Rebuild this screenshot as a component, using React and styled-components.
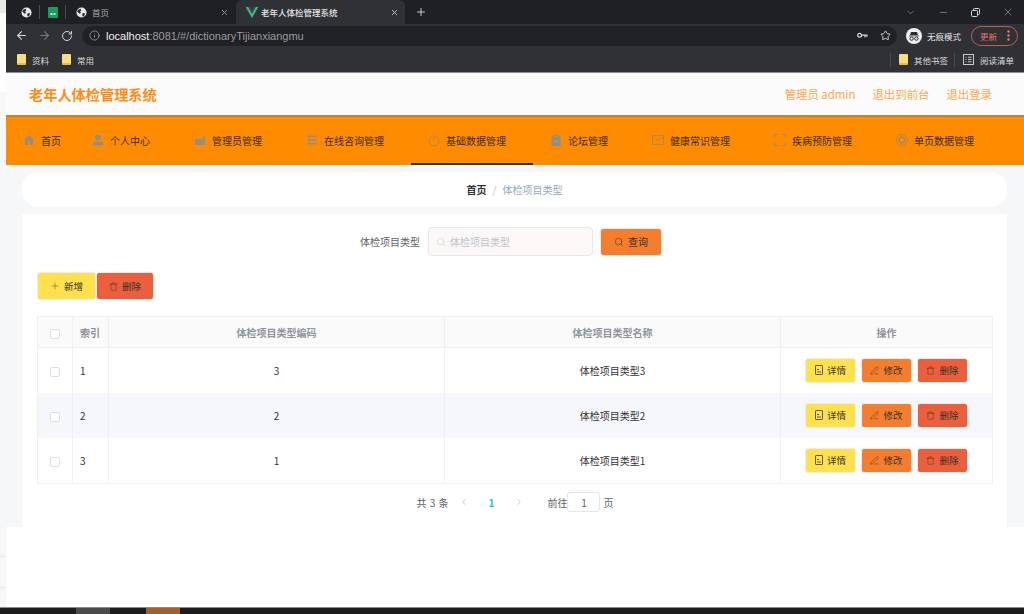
import React from 'react'
import styled, { createGlobalStyle } from 'styled-components'
import {
  ArrowLeft, ArrowRight, RotateCw, Info, Star, X, Plus, Minus, ChevronDown, ChevronLeft,
  ChevronRight, Search, Trash, PenLine,
} from 'lucide-react'

const GlobalStyle = createGlobalStyle`
  html, body { margin: 0; padding: 0; background: #fff; }
  body { font-family: "Noto Sans CJK SC", "Noto Sans", sans-serif; overflow: hidden; }
  * { box-sizing: border-box; }
`

const Screen = styled.div`
  width: 1024px;
  height: 614px;
  display: flex;
  flex-direction: column;
  overflow: hidden;
`
const Desktop = styled.div`
  height: 607px;
  display: flex;
`
const Strip = styled.div`
  width: 6px;
  display: flex;
  flex-direction: column;
  position: relative;
  z-index: 1;
`
const StripPart = styled.div`
  height: ${p => p.$h}px;
  flex: ${p => (p.$grow ? 1 : 'none')};
  background: ${p => p.$bg};
  border-bottom: ${p => (p.$line ? '1px solid #e6e7ea' : 'none')};
`
const Browser = styled.div`
  flex: 1;
  display: flex;
  flex-direction: column;
  min-width: 0;
`

/* chrome */
const TabBar = styled.div`
  height: 24px;
  margin-left: -6px;
  padding-left: 21px;
  background: #1f2023;
  display: flex;
  align-items: center;
  color: #c8c9cb;
`
const Divider = styled.span`
  width: 1px;
  height: 14px;
  background: #4a4b4e;
  margin: ${p => p.$m || '0 8px 0 7px'};
`
const InactiveTab = styled.div`
  width: 155px;
  display: flex;
  align-items: center;
  font-size: 8.5px;
  color: #a9aaad;
  gap: 5px;
  margin-left: 2px;
  padding-right: 2px;
`
const ActiveTab = styled.div`
  width: 169px;
  height: 24px;
  background: #303134;
  border-radius: 6px 6px 0 0;
  margin-left: 5px;
  padding: 0 6px 0 9px;
  display: flex;
  align-items: center;
  gap: 2px;
  font-size: 8.5px;
  color: #e6e6e7;
  font-weight: 500;
`
const TabTitle = styled.span`
  flex: 1;
`
const NewTab = styled(Plus)`
  margin-left: 10px;
`
const WindowButtons = styled.div`
  margin-left: auto;
  display: flex;
  align-items: center;
  gap: 22px;
  padding-right: 10px;
`
const Toolbar = styled.div`
  height: 23px;
  margin-left: -6px;
  background: #303134;
  padding: 0 6px 0 15px;
  display: flex;
  align-items: center;
  color: #d8d9da;
  gap: 10px;
`
const UrlPill = styled.div`
  width: 815px;
  height: 20px;
  margin-left: -1px;
  background: #202124;
  border-radius: 10px;
  padding: 0 6px 0 7px;
  display: flex;
  align-items: center;
  font-family: "Liberation Sans", sans-serif;
  font-size: 11px;
  color: #9a9b9e;
`
const UrlHost = styled.span`
  color: #f1f1f2;
  margin-left: 6px;
`
const UrlIcons = styled.div`
  margin-left: auto;
  display: flex;
  align-items: center;
  gap: 12px;
`
const Account = styled.div`
  height: 20px;
  margin-left: -1px;
  display: flex;
  align-items: center;
  gap: 5px;
  font-size: 8.5px;
  color: #e6e6e7;
  width: 58px;
`
const UpdatePill = styled.div`
  width: 47px;
  height: 20px;
  margin-left: -3px;
  border: 1px solid #b9605a;
  border-radius: 10px;
  padding: 0 7px 0 8px;
  display: flex;
  align-items: center;
  justify-content: space-between;
  font-size: 8.5px;
  color: #e8736c;
`
const Bookmarks = styled.div`
  height: 26px;
  margin-left: -6px;
  background: #303134;
  border-bottom: 1px solid #8a8a8c;
  padding: 0 10px 0 17px;
  display: flex;
  align-items: center;
  font-size: 8.5px;
  color: #dcdcdd;
`
const Mark = styled.div`
  display: flex;
  align-items: center;
  gap: 6px;
  margin-right: ${p => (p.$flush ? 0 : 13)}px;
`
const MarkRight = styled.div`
  margin-left: auto;
  display: flex;
  align-items: center;
`
const Folder = styled.span`
  width: 9px;
  height: 11px;
  background: #fbdd80;
  border-bottom: 2px solid #e8bd50;
  border-radius: 1px;
`

/* site */
const Header = styled.header`
  height: 42px;
  background: #fbfbfb;
  display: flex;
  align-items: center;
  padding: 0 32px 0 23px;
`
const Title = styled.h1`
  margin: 0;
  font-size: 14.2px;
  font-weight: 700;
  color: #ff8c14;
`
const HeaderLinks = styled.div`
  margin-left: auto;
  display: flex;
  gap: 17px;
  font-size: 11.4px;
  color: #ffa64d;
`
const Nav = styled.nav`
  height: 50px;
  background: #ff8c00;
  border-top: 2px solid #b1864a;
  display: flex;
`
const NavItem = styled.div`
  flex: none;
  white-space: nowrap;
  display: flex;
  align-items: center;
  padding: ${p => (p.$plain ? '0 14px 0 17px' : '0 13px 0 17px')};
  font-size: 10px;
  color: #3a2a10;
  border-bottom: 2px solid ${p => (p.$active ? '#33302c' : 'transparent')};
`
const NavIcon = styled.svg`
  width: 12px;
  height: 12px;
  margin-right: 6px;
  flex: none;
`
const NavChevron = styled(ChevronDown)`
  margin-left: 4px;
  color: #c99a55;
`
const Main = styled.main`
  height: 362px;
  background: #f6f7f9;
  padding: 7px 17px 0 16px;
  display: flex;
  flex-direction: column;
  gap: 7px;
`
const Breadcrumb = styled.div`
  height: 35px;
  background: #fff;
  border-radius: 16px;
  display: flex;
  align-items: center;
  justify-content: center;
  font-size: 10px;
  font-weight: 700;
  color: #303133;
  gap: 6px;
`
const CrumbSep = styled.span`
  color: #c0c4cc;
  font-weight: 400;
`
const CrumbLast = styled.span`
  color: #97a8be;
  font-weight: 400;
`
const Card = styled.section`
  flex: 1;
  background: #fff;
  padding: 13px 14px 0 15px;
`
const SearchRow = styled.div`
  height: 29px;
  display: flex;
  align-items: center;
  justify-content: center;
  padding-right: 8px;
`
const Label = styled.span`
  font-size: 10px;
  color: #606266;
  margin-right: 8px;
`
const SearchBox = styled.div`
  width: 165px;
  height: 29px;
  background: #fbf8f7;
  border: 1px solid #e8e8ec;
  border-radius: 4px;
  padding-left: 7px;
  display: flex;
  align-items: center;
  gap: 4px;
  font-size: 10px;
  color: #c0c4cc;
`
const Button = styled.button`
  border: 1px solid #eeeef0;
  border-radius: 3px;
  padding: 0;
  width: ${p => p.$w}px;
  height: ${p => p.$h}px;
  background: ${p => p.$bg};
  color: #3a3226;
  font-family: inherit;
  font-size: ${p => p.$fs || 9.5}px;
  display: inline-flex;
  align-items: center;
  justify-content: center;
  gap: 4px;
`
const SearchButton = styled(Button)`
  margin-left: 7px;
`
const ActionRow = styled.div`
  margin-top: 16px;
  display: flex;
`
const Table = styled.table`
  width: 955px;
  margin-top: 16px;
  border-collapse: collapse;
  table-layout: fixed;
  font-size: 10px;
`
const Th = styled.th`
  height: 31px;
  padding: ${p => (p.$left ? '0 0 0 7px' : 0)};
  background: #fafafa;
  border: 1px solid #eef0f3;
  color: #909399;
  font-weight: 700;
  text-align: ${p => (p.$left ? 'left' : 'center')};
`
const Row = styled.tr`
  background: ${p => (p.$striped ? '#f5f7fa' : '#fff')};
`
const Td = styled.td`
  height: ${p => (p.$last ? 46 : 45)}px;
  padding: ${p => (p.$left ? '0 0 0 7px' : 0)};
  border-left: 1px solid #eef0f3;
  border-right: 1px solid #eef0f3;
  border-bottom: ${p => (p.$last ? '1px solid #eef0f3' : 'none')};
  color: #333;
  text-align: ${p => (p.$left ? 'left' : 'center')};
`
const Check = styled.span`
  display: inline-block;
  width: 10px;
  height: 10px;
  background: #fff;
  border: 1px solid #dcdfe6;
  border-radius: 2px;
  vertical-align: middle;
`
const Ops = styled.div`
  display: flex;
  justify-content: center;
  gap: 5px;
`
const Pager = styled.div`
  margin-top: 8px;
  display: flex;
  align-items: center;
  justify-content: center;
  height: 20px;
  font-size: 10px;
  color: #606266;
`
const PagerTotal = styled.span`
  word-spacing: 1px;
`
const PageNum = styled.span`
  color: #1cc7b0;
  font-weight: 700;
  margin: 0 20px;
`
const PagerGap = styled.span`
  margin-left: ${p => p.$m}px;
`
const PageInput = styled.span`
  width: 33px;
  height: 20px;
  margin-right: 3px;
  border: 1px solid #e4e7ed;
  border-radius: 3px;
  display: flex;
  align-items: center;
  justify-content: center;
`

const Taskbar = styled.div`
  height: 7px;
  background: #1c1c1c;
  border-top: 1px solid #8c8c8c;
  display: flex;
`
const TaskItem = styled.span`
  width: 34px;
  height: 6px;
  margin-left: ${p => p.$m}px;
  background: ${p => p.$bg};
`
const Clock = styled.span`
  margin-left: auto;
  margin-right: 18px;
  font-family: "Liberation Sans", sans-serif;
  font-size: 9px;
  line-height: 10px;
  padding-top: 4px;
  color: #ddd;
`

const Globe = () => (
  <svg width="11" height="11" viewBox="0 0 12 12">
    <circle cx="6" cy="6" r="5.5" fill="#e8e8e9" />
    <path d="M2 3.2 5 2l.8 1.6L4.4 5l1 1.4-1.2 1L2.4 6 1.4 5zM7.4 6.6l2.6.6-1.2 2.6-1.6.6-.4-2z" fill="#26272a" />
  </svg>
)
const Sheet = () => (
  <svg width="10" height="11" viewBox="0 0 10 11">
    <rect width="10" height="11" rx="1" fill="#12a05c" />
    <rect x="2.5" y="6" width="2" height="2" fill="#cfeedd" />
    <rect x="5.5" y="6" width="2" height="2" fill="#cfeedd" />
  </svg>
)
const VueLogo = () => (
  <svg width="14" height="11" viewBox="0 0 14 12">
    <path d="M0 0h3l4 7 4-7h3L7 12z" fill="#3fb984" />
    <path d="M3 0h2.2L7 3.2 8.8 0H11L7 7z" fill="#35495e" />
  </svg>
)
const Restore = () => (
  <svg width="9" height="9" viewBox="0 0 9 9" fill="none" stroke="#d8d9da">
    <rect x=".5" y="2.5" width="6" height="6" rx="1" />
    <path d="M2.5 2.5V1.4a.9.9 0 0 1 .9-.9h4.2a.9.9 0 0 1 .9.9v4.2a.9.9 0 0 1-.9.9H6.5" />
  </svg>
)
const PasswordKey = () => (
  <svg width="11" height="7" viewBox="0 0 11 7" fill="none" stroke="#d8d9da" strokeWidth="1.2">
    <circle cx="2.6" cy="3.2" r="1.9" />
    <path d="M4.5 3.2h6M8 3.2v2.2M10 3.2v1.6" />
  </svg>
)
const Incognito = () => (
  <svg width="16" height="16" viewBox="0 0 16 16">
    <circle cx="8" cy="8" r="8" fill="#eeeeef" />
    <path d="M3 7.4h10v.9H3zM5 4h6l.9 3H4.1z" fill="#2a2b2e" />
    <circle cx="5.6" cy="10.6" r="1.7" fill="none" stroke="#2a2b2e" />
    <circle cx="10.4" cy="10.6" r="1.7" fill="none" stroke="#2a2b2e" />
  </svg>
)
const MoreDots = () => (
  <svg width="3" height="11" viewBox="0 0 3 11" fill="#e8736c">
    <circle cx="1.5" cy="1.5" r="1.2" /><circle cx="1.5" cy="5.5" r="1.2" /><circle cx="1.5" cy="9.5" r="1.2" />
  </svg>
)
const ReadList = () => (
  <svg width="11" height="11" viewBox="0 0 11 11" fill="none" stroke="#c9cacb">
    <rect x=".5" y=".5" width="10" height="10" />
    <path d="M2.5 3.2h1M5 3.2h3.6M2.5 5.5h1M5 5.5h3.6M2.5 7.8h1M5 7.8h3.6" />
  </svg>
)
const Tickets = () => (
  <svg width="8" height="10" viewBox="0 0 8 10" fill="none" stroke="currentColor" strokeWidth=".8">
    <rect x=".5" y=".5" width="7" height="9" rx=".6" />
    <path d="M2 4.5h2M2 7h4" />
  </svg>
)

const navIcons = {
  home: <path d="M6 1 .6 6.4 2 6.4V11h3V7.6h2V11h3V6.4h1.4z" fill="#8f8f8b" />,
  user: (
    <g fill="#8f8f8b">
      <circle cx="6" cy="3.4" r="2.9" />
      <path d="M.8 11.6V9.4c0-1.3 1-2 2.2-2h6c1.2 0 2.2.7 2.2 2v2.2z" />
    </g>
  ),
  wallet: <path d="M1 5h7.6L10.4 1l.8 1.6V11H1zM8 7.4h3.2v1.6H8z" fill="#8f8f8b" />,
  list: <path d="M1 1.6h10v1.5H1zM1 5.2h10v1.5H1zM1 8.9h10v1.5H1zM3 3.1h1v2H3zM3 6.7h1v2.2H3z" fill="#8f8f8b" />,
  power: (
    <g fill="none" stroke="#a48a5c" strokeWidth=".9">
      <path d="M3.6 2.4a5 5 0 1 0 4.8 0M6 .6v5" />
    </g>
  ),
  clip: (
    <g>
      <path d="M1.4 1.8h9.2V12H1.4z" fill="#8f8f8b" />
      <rect x="3.6" y=".4" width="4.8" height="2.4" fill="#8f8f8b" stroke="#ff8c00" strokeWidth=".5" />
      <path d="M3.6 7l1.8 1.8 3-3.2" fill="none" stroke="#ff8c00" />
    </g>
  ),
  mail: (
    <g fill="none" stroke="#a48a5c" strokeWidth=".9">
      <rect x=".5" y="1.6" width="11" height="8.8" />
      <path d="M.8 2.4 6 6.6l5.2-4.2" />
    </g>
  ),
  full: <path d="M.6 3.6V.6h3M8.4.6h3v3M11.4 8.4v3h-3M3.6 11.4h-3v-3" fill="none" stroke="#8f8f8b" />,
  target: (
    <g fill="none" stroke="#a48a5c" strokeWidth=".9">
      <circle cx="6" cy="6" r="5.5" />
      <circle cx="6" cy="6" r="3" strokeWidth="1.4" />
    </g>
  ),
}

const navItems = [
  { icon: 'home', label: '首页' },
  { icon: 'user', label: '个人中心' },
  { icon: 'wallet', label: '管理员管理' },
  { icon: 'list', label: '在线咨询管理' },
  { icon: 'power', label: '基础数据管理', active: true },
  { icon: 'clip', label: '论坛管理' },
  { icon: 'mail', label: '健康常识管理' },
  { icon: 'full', label: '疾病预防管理' },
  { icon: 'target', label: '单页数据管理' },
]

const rows = [
  { id: 1, code: 3, name: '体检项目类型3' },
  { id: 2, code: 2, name: '体检项目类型2' },
  { id: 3, code: 1, name: '体检项目类型1' },
]

const YELLOW = '#ffe14d'
const ORANGE = '#f57e2e'
const RED = '#eb5f3d'

const App = () => (
  <Screen>
    <GlobalStyle />
    <Desktop>
      <Strip>
        <StripPart $h={13} $bg="#e9e9ea" />
        <StripPart $h={79} $bg="#fff" />
        <StripPart $h={465} $bg="#f6f7f9" $line />
        <StripPart $h={31} $bg="#f6f7f9" $line />
        <StripPart $grow $bg="#f6f7f9" />
      </Strip>
      <Browser>
        <TabBar>
          <Globe />
          <Divider />
          <Sheet />
          <Divider />
          <InactiveTab>
            <Globe />
            <TabTitle>首页</TabTitle>
            <X size={9} />
          </InactiveTab>
          <ActiveTab>
            <VueLogo />
            <TabTitle>老年人体检管理系统</TabTitle>
            <X size={9} />
          </ActiveTab>
          <NewTab size={12} />
          <WindowButtons>
            <ChevronDown size={11} strokeWidth={1} />
            <Minus size={11} strokeWidth={1} />
            <Restore />
            <X size={12} strokeWidth={1} />
          </WindowButtons>
        </TabBar>
        <Toolbar>
          <ArrowLeft size={13} />
          <ArrowRight size={13} color="#77787a" />
          <RotateCw size={12} />
          <UrlPill>
            <Info size={11} strokeWidth={1.4} color="#bcbdbf" />
            <UrlHost>localhost</UrlHost>:8081/#/dictionaryTijianxiangmu
            <UrlIcons>
              <PasswordKey />
              <Star size={11} color="#d8d9da" />
            </UrlIcons>
          </UrlPill>
          <Account>
            <Incognito />
            无痕模式
          </Account>
          <UpdatePill>
            更新
            <MoreDots />
          </UpdatePill>
        </Toolbar>
        <Bookmarks>
          <Mark><Folder />资料</Mark>
          <Mark><Folder />常用</Mark>
          <MarkRight>
            <Divider $m="0 8px 0 0" />
            <Mark $flush><Folder />其他书签</Mark>
            <Divider $m="0 8px 0 6px" />
            <Mark $flush><ReadList />阅读清单</Mark>
          </MarkRight>
        </Bookmarks>
        <Header>
          <Title>老年人体检管理系统</Title>
          <HeaderLinks>
            <span>管理员 admin</span>
            <span>退出到前台</span>
            <span>退出登录</span>
          </HeaderLinks>
        </Header>
        <Nav>
          {navItems.map(item => (
            <NavItem key={item.label} $active={item.active} $plain={item.icon === 'home'}>
              <NavIcon viewBox="0 0 12 12">{navIcons[item.icon]}</NavIcon>
              {item.label}
              {item.icon !== 'home' && <NavChevron size={10} strokeWidth={1} />}
            </NavItem>
          ))}
        </Nav>
        <Main>
          <Breadcrumb>
            首页 <CrumbSep>/</CrumbSep> <CrumbLast>体检项目类型</CrumbLast>
          </Breadcrumb>
          <Card>
            <SearchRow>
              <Label>体检项目类型</Label>
              <SearchBox>
                <Search size={10} strokeWidth={1} />
                体检项目类型
              </SearchBox>
              <SearchButton $w={62} $h={28} $bg={ORANGE} $fs={10}>
                <Search size={10} strokeWidth={1.2} />
                查询
              </SearchButton>
            </SearchRow>
            <ActionRow>
              <Button $w={59} $h={28} $bg={YELLOW}>
                <Plus size={10} strokeWidth={1} />
                新增
              </Button>
              <Button $w={58} $h={28} $bg={RED}>
                <Trash size={9} strokeWidth={1.2} />
                删除
              </Button>
            </ActionRow>
            <Table>
              <colgroup>
                <col style={{ width: 35 }} />
                <col style={{ width: 36 }} />
                <col style={{ width: 336 }} />
                <col style={{ width: 336 }} />
                <col style={{ width: 212 }} />
              </colgroup>
              <thead>
                <tr>
                  <Th><Check /></Th>
                  <Th $left>索引</Th>
                  <Th>体检项目类型编码</Th>
                  <Th>体检项目类型名称</Th>
                  <Th>操作</Th>
                </tr>
              </thead>
              <tbody>
                {rows.map((row, index) => {
                  const last = index === rows.length - 1
                  return (
                    <Row key={row.id} $striped={index === 1}>
                      <Td $last={last}><Check /></Td>
                      <Td $left $last={last}>{row.id}</Td>
                      <Td $last={last}>{row.code}</Td>
                      <Td $last={last}>{row.name}</Td>
                      <Td $last={last}>
                        <Ops>
                          <Button $w={51} $h={25} $bg={YELLOW}>
                            <Tickets />
                            详情
                          </Button>
                          <Button $w={51} $h={25} $bg={ORANGE}>
                            <PenLine size={9} strokeWidth={1.2} />
                            修改
                          </Button>
                          <Button $w={51} $h={25} $bg={RED}>
                            <Trash size={9} strokeWidth={1.2} />
                            删除
                          </Button>
                        </Ops>
                      </Td>
                    </Row>
                  )
                })}
              </tbody>
            </Table>
            <Pager>
              <PagerTotal>共 3 条</PagerTotal>
              <PagerGap $m={10} />
              <ChevronLeft size={10} color="#c0c4cc" />
              <PageNum>1</PageNum>
              <ChevronRight size={10} color="#c0c4cc" />
              <PagerGap $m={23} />
              <span>前往</span>
              <PageInput>1</PageInput>
              <span>页</span>
            </Pager>
          </Card>
        </Main>
      </Browser>
    </Desktop>
    <Taskbar>
      <TaskItem $m={76} $bg="#4a4a4a" />
      <TaskItem $m={36} $bg="#a85f22" />
      <Clock>16:43</Clock>
    </Taskbar>
  </Screen>
)

export default App
